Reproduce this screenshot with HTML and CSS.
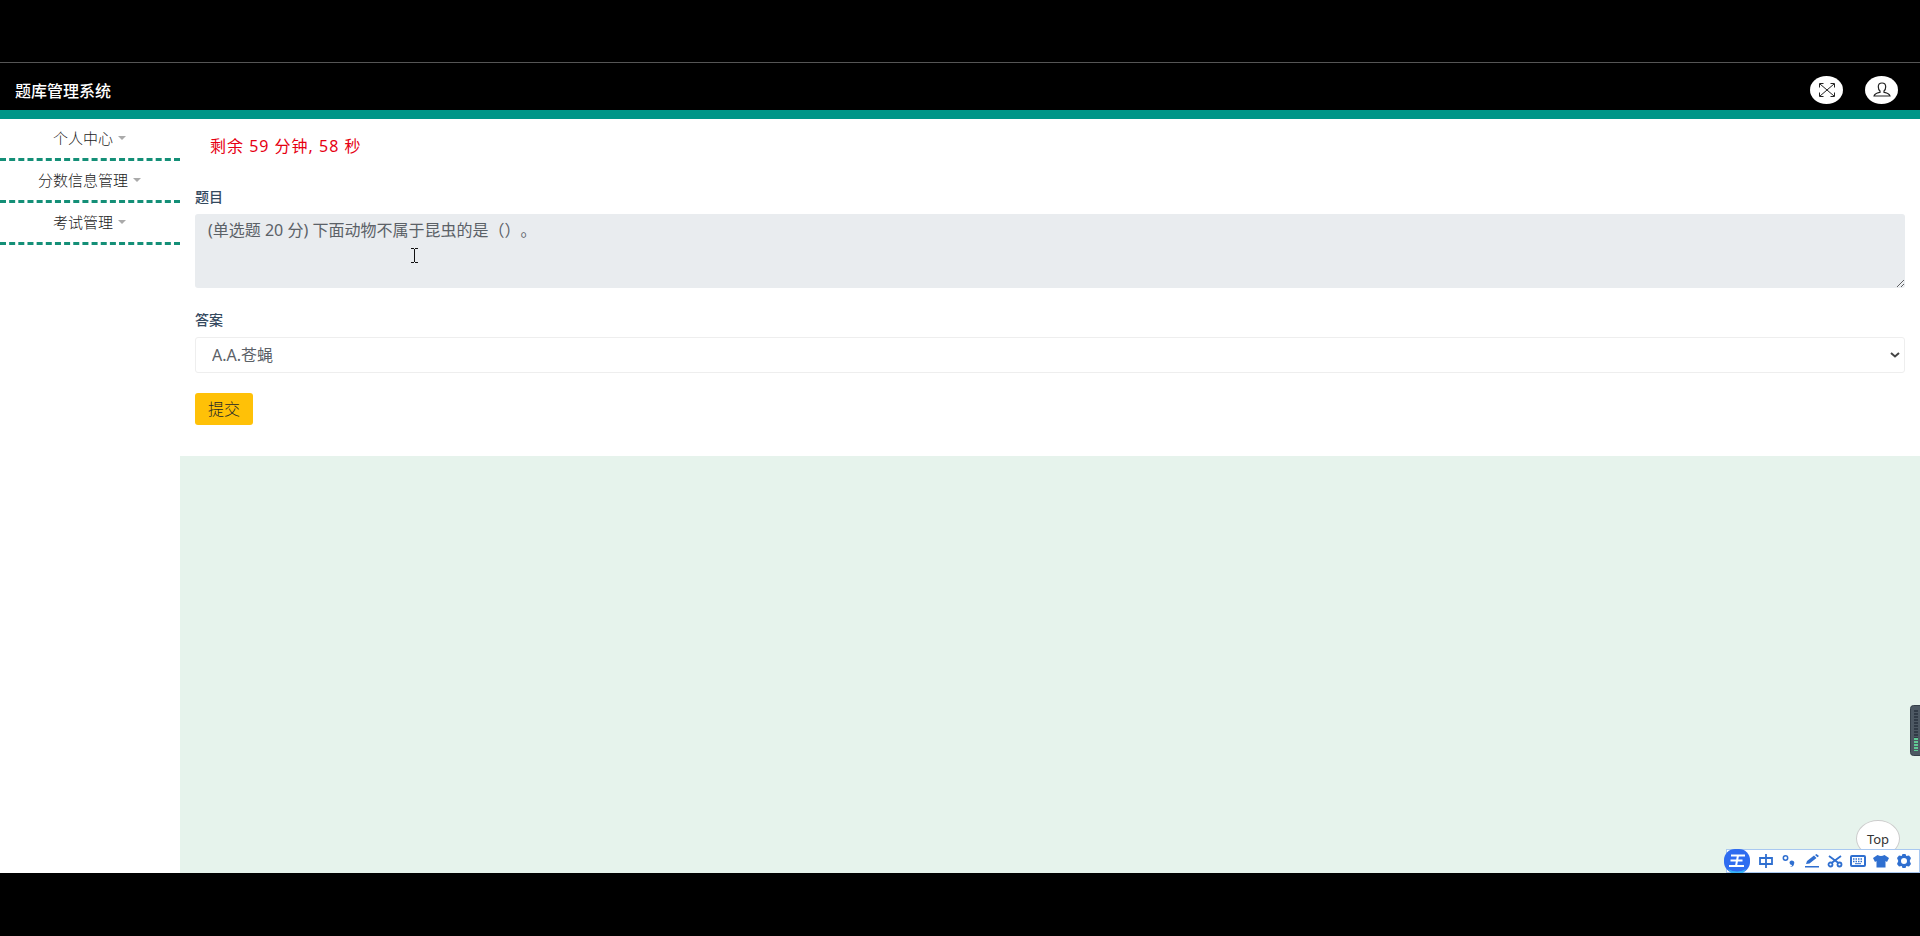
FILE: index.html
```html
<!DOCTYPE html>
<html lang="zh-CN">
<head>
<meta charset="utf-8">
<title>题库管理系统</title>
<link rel="stylesheet" href="styles.css">
</head>
<body>
<div class="screen">
  <header class="header">
    <h1 class="brand">题库管理系统</h1>
    <div class="actions">
      <button class="round" type="button" aria-label="全屏">
        <svg width="16" height="14" viewBox="0 0 16 14" fill="none" stroke="#222"><path d="M1 1l14 12M15 1L1 13M.5 4.500v-4h4M11.500.5h4v4M15.500 9.500v4h-4M4.500 13.500h-4v-4"/></svg>
      </button>
      <button class="round" type="button" aria-label="用户">
        <svg width="18" height="16" viewBox="0 0 18 16" fill="none" stroke="#222" stroke-width="1.2"><path d="M7 9C5.700 8 5.300 6.300 5.300 4.800 5.300 2.300 6.600 1 9 1s3.700 1.300 3.700 3.800c0 1.500-.4 3.200-1.700 4.200v1.300c3 .7 5.500 1.200 6 3.700H1c.5-2.500 3-3 6-3.700z"/></svg>
      </button>
    </div>
  </header>
  <div class="body">
    <nav class="sidebar">
      <a class="item" href="#me">个人中心<span class="caret"></span></a>
      <a class="item" href="#score">分数信息管理<span class="caret"></span></a>
      <a class="item" href="#exam">考试管理<span class="caret"></span></a>
    </nav>
    <main class="main">
      <form class="panel">
        <p class="timer">剩余 59 分钟, 58 秒</p>
        <label class="label" for="question">题目</label>
        <textarea class="question" id="question" readonly>(单选题 20 分) 下面动物不属于昆虫的是（）。</textarea>
        <label class="label" for="answer">答案</label>
        <div class="select-box">
          <select class="answer" id="answer"><option>A.A.苍蝇</option></select>
          <svg class="chevron" width="10" height="6" viewBox="0 0 10 6" fill="none" stroke="#444" stroke-width="2"><path d="M1 1l4 3.500L9 1"/></svg>
        </div>
        <button class="submit" type="button">提交</button>
      </form>
    </main>
  </div>
  <a class="top" href="#">Top</a>
  <div class="ime">
    <svg class="ime-logo" width="28" height="25" viewBox="0 0 28 25"><rect x="1" y="0" width="26" height="24" rx="11" fill="#2f6cf0"/><path d="M5 20q9 5 18 0l-3 4H8z" fill="#36b3f5"/><path d="M8 6.500h14M7.500 11.500h12M6 17h15M15 6.500L13 17" stroke="#fff" stroke-width="2" fill="none"/></svg>
    <svg width="16" height="14" viewBox="0 0 16 14" fill="none" stroke="#2f6fd0" stroke-width="1.800"><path d="M2 4h12v6H2zM8 0v14"/></svg>
    <svg width="16" height="14" viewBox="0 0 16 14"><circle cx="4.500" cy="4" r="2.200" fill="none" stroke="#2f6fd0" stroke-width="1.500"/><path d="M8.500 8a2.300 2.300 0 1 1 4.500 2c0 2-2 3-4 3 1-.5 2-1 2-2-1.500 0-2.500-1-2.500-3z" fill="#2f6fd0"/></svg>
    <svg width="16" height="14" viewBox="0 0 16 14" fill="#2f6fd0"><path d="M2 10l1-3 7-5.500L12.500 4 5.500 9.500zM11 1l1.500-1L15 2l-1.500 1.200zM1 12h14v1.500H1z"/></svg>
    <svg width="16" height="14" viewBox="0 0 16 14" fill="none" stroke="#2f6fd0" stroke-width="1.800"><path d="M2 2l9.500 7M14 2L4.500 9"/><circle cx="3.500" cy="10.500" r="2"/><circle cx="12.500" cy="10.500" r="2"/></svg>
    <svg width="16" height="14" viewBox="0 0 16 14" fill="none" stroke="#2f6fd0"><rect x="1" y="2" width="14" height="10" rx="1" stroke-width="2"/><path d="M3 5h10M3 7.500h10" stroke-width="1.500" stroke-dasharray="1.500 1"/><path d="M5 9.700h6"/></svg>
    <svg width="16" height="14" viewBox="0 0 16 14" fill="#2f6fd0"><path d="M4.500 1q3.500 2 7 0L16 4l-2 4-1.500-1v6.500h-9V7L2 8 0 4z"/></svg>
    <svg width="16" height="14" viewBox="0 0 16 14" fill="#2f6fd0" fill-rule="evenodd"><path d="M6.500 0h3l.8 2 2.700-.5 2 2.500-1.300 3L15 10l-2 2.500-2.700-.5-.8 2h-3l-.8-2-2.700.5L1 10l1.300-3L1 4l2-2.500 2.700.5zM8 4a3 3 0 1 0 0 6 3 3 0 0 0 0-6z"/></svg>
  </div>
  <svg class="meter" width="10" height="51" viewBox="0 0 10 51"><rect x=".5" y=".5" width="14" height="50" rx="3" fill="#4d5863" stroke="#353f49"/><path d="M6 5v29" stroke="#303a46" stroke-width="4" stroke-dasharray="2 1"/><path d="M6 33v13" stroke="#5fcb94" stroke-width="4" stroke-dasharray="2 1"/></svg>
  <svg class="cursor" width="9" height="15" viewBox="0 0 9 15" fill="none" stroke="#111"><path d="M1 .5h3M5 .5h3M4.500 1v13M1 14.500h3M5 14.500h3"/></svg>
</div>
</body>
</html>
```
FILE: styles.css
```css
* { box-sizing: border-box; }
body {
  margin: 0;
  min-height: 100vh;
  padding: 62px 0 63px;
  background: #000;
  display: flex;
  font: 16px/24px "Noto Sans", "Noto Sans CJK SC", sans-serif;
  text-spacing-trim: space-all;
  color: #495057;
}
.screen {
  flex: 1;
  position: relative;
  display: flex;
  flex-direction: column;
  border-top: 1px solid #555;
}
.header {
  display: flex;
  justify-content: space-between;
  align-items: center;
  height: 56px;
  padding: 0 22px 0 15px;
  border-bottom: 9px solid #009688;
}
.brand {
  margin: 8px 0 0;
  font-size: 16px;
  line-height: 24px;
  font-weight: 500;
  color: #fff;
}
.actions { display: flex; gap: 22px; margin-top: 7px; }
.round {
  display: flex;
  align-items: center;
  justify-content: center;
  width: 33px;
  height: 28px;
  padding: 0;
  border: 0;
  border-radius: 50%;
  background: #fff;
}
.body { flex: 1; display: flex; background: #e6f3ec; }
.sidebar {
  flex: none;
  width: 180px;
  display: flex;
  flex-direction: column;
  background: #fff;
}
.item {
  display: flex;
  align-items: center;
  justify-content: center;
  gap: 5px;
  height: 42px;
  padding: 0 1px 1px 0;
  border-bottom: 3px dashed #148f77;
  font-size: 15px;
  font-weight: 300;
  color: #222;
  text-decoration: none;
}
.caret {
  border: 4px solid transparent;
  border-top-color: #aaa;
  border-bottom: 0;
}
.main { flex: 1; }
.panel {
  display: flex;
  flex-direction: column;
  align-items: flex-start;
  padding: 15px 15px 31px;
  background: #fff;
}
.timer {
  margin: 0 0 27px;
  padding-left: 15px;
  letter-spacing: 1px;
  color: #e60012;
}
.label {
  height: 24px;
  font-size: 14px;
  font-weight: 500;
  color: #34495e;
}
.question {
  width: 100%;
  height: 74px;
  margin: 5px 0 20px;
  padding: 4px 13px;
  border: 0;
  border-radius: 3px;
  background: #e9ecef;
  font: inherit;
  text-spacing-trim: inherit;
  color: #5b6167;
}
.select-box { position: relative; width: 100%; margin: 5px 0 20px; }
.answer {
  display: block;
  appearance: none;
  width: 100%;
  height: 36px;
  padding: 0 16px;
  border: 1px solid #eee;
  border-radius: 3px;
  background: #fff;
  font: inherit;
  color: #5b6167;
}
.chevron { position: absolute; right: 5px; top: 15px; }
.submit {
  height: 32px;
  padding: 0 13px;
  border: 0;
  border-radius: 3px;
  background: #ffc107;
  font: inherit;
  font-weight: 300;
  color: #212529;
}
.top {
  position: absolute;
  right: 20px;
  bottom: 16px;
  width: 44px;
  height: 37px;
  border: 1px solid #ccc;
  border-radius: 50%;
  background: #fff;
  font-size: 13px;
  line-height: 36px;
  text-align: center;
  color: #333;
  text-decoration: none;
}
.ime {
  position: absolute;
  right: 0;
  bottom: 0;
  display: flex;
  align-items: center;
  gap: 7px;
  height: 24px;
  padding-right: 7px;
  border: 1px solid #a9c8f0;
  background: #fff;
}
.ime-logo { margin-left: -4px; }
.meter { position: absolute; right: 0; bottom: 117px; }
.cursor { position: absolute; left: 410px; top: 185px; }
```
